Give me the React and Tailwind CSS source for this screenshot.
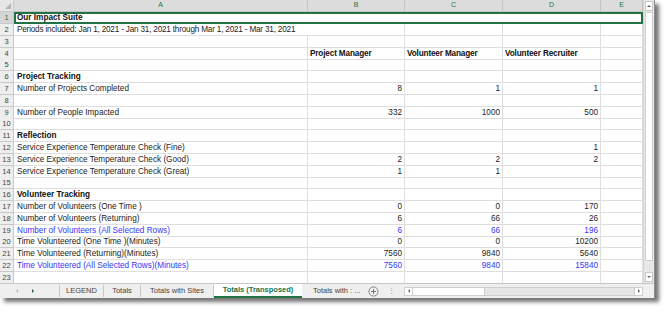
import React from 'react';

const cols = ['A', 'B', 'C', 'D', 'E'];

const rows = [
  { n: 1, merged: true, a: 'Our Impact Suite', bold: true },
  { n: 2, wide: true, a: 'Periods included: Jan 1, 2021 - Jan 31, 2021 through Mar 1, 2021 - Mar 31, 2021' },
  { n: 3 },
  { n: 4, head: ['Project Manager', 'Volunteer Manager', 'Volunteer Recruiter'] },
  { n: 5 },
  { n: 6, a: 'Project Tracking', bold: true },
  { n: 7, a: 'Number of Projects Completed', v: ['8', '1', '1'] },
  { n: 8 },
  { n: 9, a: 'Number of People Impacted', v: ['332', '1000', '500'] },
  { n: 10 },
  { n: 11, a: 'Reflection', bold: true },
  { n: 12, a: 'Service Experience Temperature Check (Fine)', v: ['', '', '1'] },
  { n: 13, a: 'Service Experience Temperature Check (Good)', v: ['2', '2', '2'] },
  { n: 14, a: 'Service Experience Temperature Check (Great)', v: ['1', '1', ''] },
  { n: 15 },
  { n: 16, a: 'Volunteer Tracking', bold: true },
  { n: 17, a: 'Number of Volunteers (One Time )', v: ['0', '0', '170'] },
  { n: 18, a: 'Number of Volunteers (Returning)', v: ['6', '66', '26'] },
  { n: 19, a: 'Number of Volunteers (All Selected Rows)', v: ['6', '66', '196'], blue: true },
  { n: 20, a: 'Time Volunteered (One Time )(Minutes)', v: ['0', '0', '10200'] },
  { n: 21, a: 'Time Volunteered (Returning)(Minutes)', v: ['7560', '9840', '5640'] },
  { n: 22, a: 'Time Volunteered (All Selected Rows)(Minutes)', v: ['7560', '9840', '15840'], blue: true },
  { n: 23 },
];

const cell = 'border-r border-b border-[#dedede] truncate';

function RowHead({ n }) {
  return (
    <div
      className={`border-r border-b border-[#c9c9c9] flex items-center justify-center text-[7.5px] ${
        n === 1 ? 'bg-[#d5d5d5] text-[#217346]' : 'bg-[#eeeeee] text-[#444]'
      }`}
    >
      {n}
    </div>
  );
}

function Row({ r }) {
  const color = r.blue ? 'text-[#3535ff]' : 'text-[#1c1c1c]';
  if (r.merged) {
    return (
      <div className="grid grid-cols-[14px_294px_97px_98px_98px_42px] h-[12.5px]">
        <RowHead n={r.n} />
        <div className="col-span-5 border-2 border-[#217346] px-[1px] font-bold leading-[8.5px] text-[#111]">{r.a}</div>
      </div>
    );
  }
  return (
    <div className={`grid grid-cols-[14px_294px_97px_98px_98px_42px] h-[11.8px] leading-[11px] ${color}`}>
      <RowHead n={r.n} />
      <div
        className={`${cell} ${r.wide ? 'col-span-2 tracking-[-0.2px]' : ''} pl-[3px] ${
          r.bold ? 'font-bold text-[#111]' : ''
        }`}
      >
        {r.a || ''}
      </div>
      {r.head &&
        r.head.map((h) => (
          <div key={h} className={`${cell} pl-[2px] font-bold text-[#111] tracking-[-0.15px]`}>
            {h}
          </div>
        ))}
      {r.v &&
        r.v.map((x, i) => (
          <div key={i} className={`${cell} text-right pr-[2px]`}>
            {x}
          </div>
        ))}
      {!r.head && !r.v && (r.wide ? [0, 1] : [0, 1, 2]).map((i) => <div key={i} className={cell} />)}
      <div className={cell} />
    </div>
  );
}

function Tri({ dir, color = '#777', size = 3 }) {
  const pts = {
    left: `${size},0 0,${size} ${size},${size * 2}`,
    right: `0,0 ${size},${size} 0,${size * 2}`,
    up: `0,${size} ${size},0 ${size * 2},${size}`,
    down: `0,0 ${size * 2},0 ${size},${size}`,
  }[dir];
  const w = dir === 'left' || dir === 'right' ? size : size * 2;
  const h = dir === 'left' || dir === 'right' ? size * 2 : size;
  return (
    <svg width={w} height={h} viewBox={`0 0 ${w} ${h}`}>
      <polygon points={pts} fill={color} />
    </svg>
  );
}

export default function App() {
  return (
    <div className="w-[670px] h-[313px] bg-white overflow-hidden font-['Liberation_Sans',Arial,sans-serif] text-[8.2px]">
      <div className="w-[655px] h-[298px] bg-white border-r border-[#8f8f8f] shadow-[4px_4px_4px_rgba(0,0,0,0.55)] flex flex-col">
        <div className="flex h-[283px] overflow-hidden">
          <div className="w-[643px] flex flex-col">
            <div className="grid grid-cols-[14px_294px_97px_98px_98px_42px] h-[11.5px] text-[7px] text-[#217346]">
              <div className="bg-[#e6e6e6] border-r border-b border-[#c9c9c9] flex items-end justify-end pr-[2px] pb-[2px]">
                <svg width="6" height="6" viewBox="0 0 6 6">
                  <polygon points="6,0 6,6 0,6" fill="#b5b5b5" />
                </svg>
              </div>
              {cols.map((c) => (
                <div key={c} className="bg-[#dcdcdc] border-r border-b border-[#c3c3c3] flex items-center justify-center">
                  {c}
                </div>
              ))}
            </div>
            {rows.map((r) => (
              <Row key={r.n} r={r} />
            ))}
          </div>
          <div className="w-[11px] bg-[#e8e8e8] border-l border-[#d4d4d4] flex flex-col items-stretch">
            <div className="h-[10px] mt-[1px] mx-[1px] bg-white border border-[#c8c8c8] flex items-center justify-center">
              <Tri dir="up" size={2} color="#666" />
            </div>
            <div className="h-[249px] mx-[1px] mt-[1px] bg-white border border-[#cfcfcf]" />
            <div className="flex-1" />
            <div className="h-[10px] mb-[1px] mx-[1px] bg-white border border-[#c8c8c8] flex items-center justify-center">
              <Tri dir="down" size={2} color="#666" />
            </div>
          </div>
        </div>
        <div className="flex h-[15px] bg-[#efefef] border-t border-[#c6c6c6] items-stretch text-[7.5px] text-[#444]">
          <div className="w-[59px] flex items-center">
            <div className="ml-[16px]">
              <Tri dir="left" size={2} color="#bbb" />
            </div>
            <div className="ml-[14px]">
              <Tri dir="right" size={2} color="#2b5f3f" />
            </div>
          </div>
          <div className="w-[44px] border-l border-[#c6c6c6] my-[1px] flex items-center justify-center">LEGEND</div>
          <div className="w-[37px] border-l border-[#c6c6c6] my-[1px] flex items-center justify-center">Totals</div>
          <div className="w-[74px] border-l border-r border-[#c6c6c6] my-[1px] flex items-center justify-center">Totals with Sites</div>
          <div className="w-[88px] bg-white border-b-2 border-[#217346] flex items-center justify-center font-bold text-[#217346]">
            Totals (Transposed)
          </div>
          <div className="w-[66px] flex items-center pl-[11px]">Totals with : ...</div>
          <div className="w-[11px] flex items-center justify-center">
            <svg width="11" height="11" viewBox="0 0 11 11">
              <circle cx="5.5" cy="5.5" r="4.6" fill="none" stroke="#777" strokeWidth="0.9" />
              <path d="M5.5 3v5M3 5.5h5" stroke="#777" strokeWidth="1" />
            </svg>
          </div>
          <div className="w-[25px] flex items-center justify-center text-[#999] text-[7px]">⋮</div>
          <div className="w-[239px] flex items-center">
            <div className="flex w-full h-[9px] bg-[#e6e6e6] border border-[#cfcfcf]">
              <div className="w-[8px] bg-white border-r border-[#cfcfcf] flex items-center justify-center">
                <Tri dir="left" size={2} color="#666" />
              </div>
              <div className="w-[72px] bg-white border-r border-[#cfcfcf]" />
              <div className="flex-1" />
              <div className="w-[8px] bg-white border-l border-[#cfcfcf] flex items-center justify-center">
                <Tri dir="right" size={2} color="#666" />
              </div>
            </div>
          </div>
        </div>
      </div>
    </div>
  );
}
